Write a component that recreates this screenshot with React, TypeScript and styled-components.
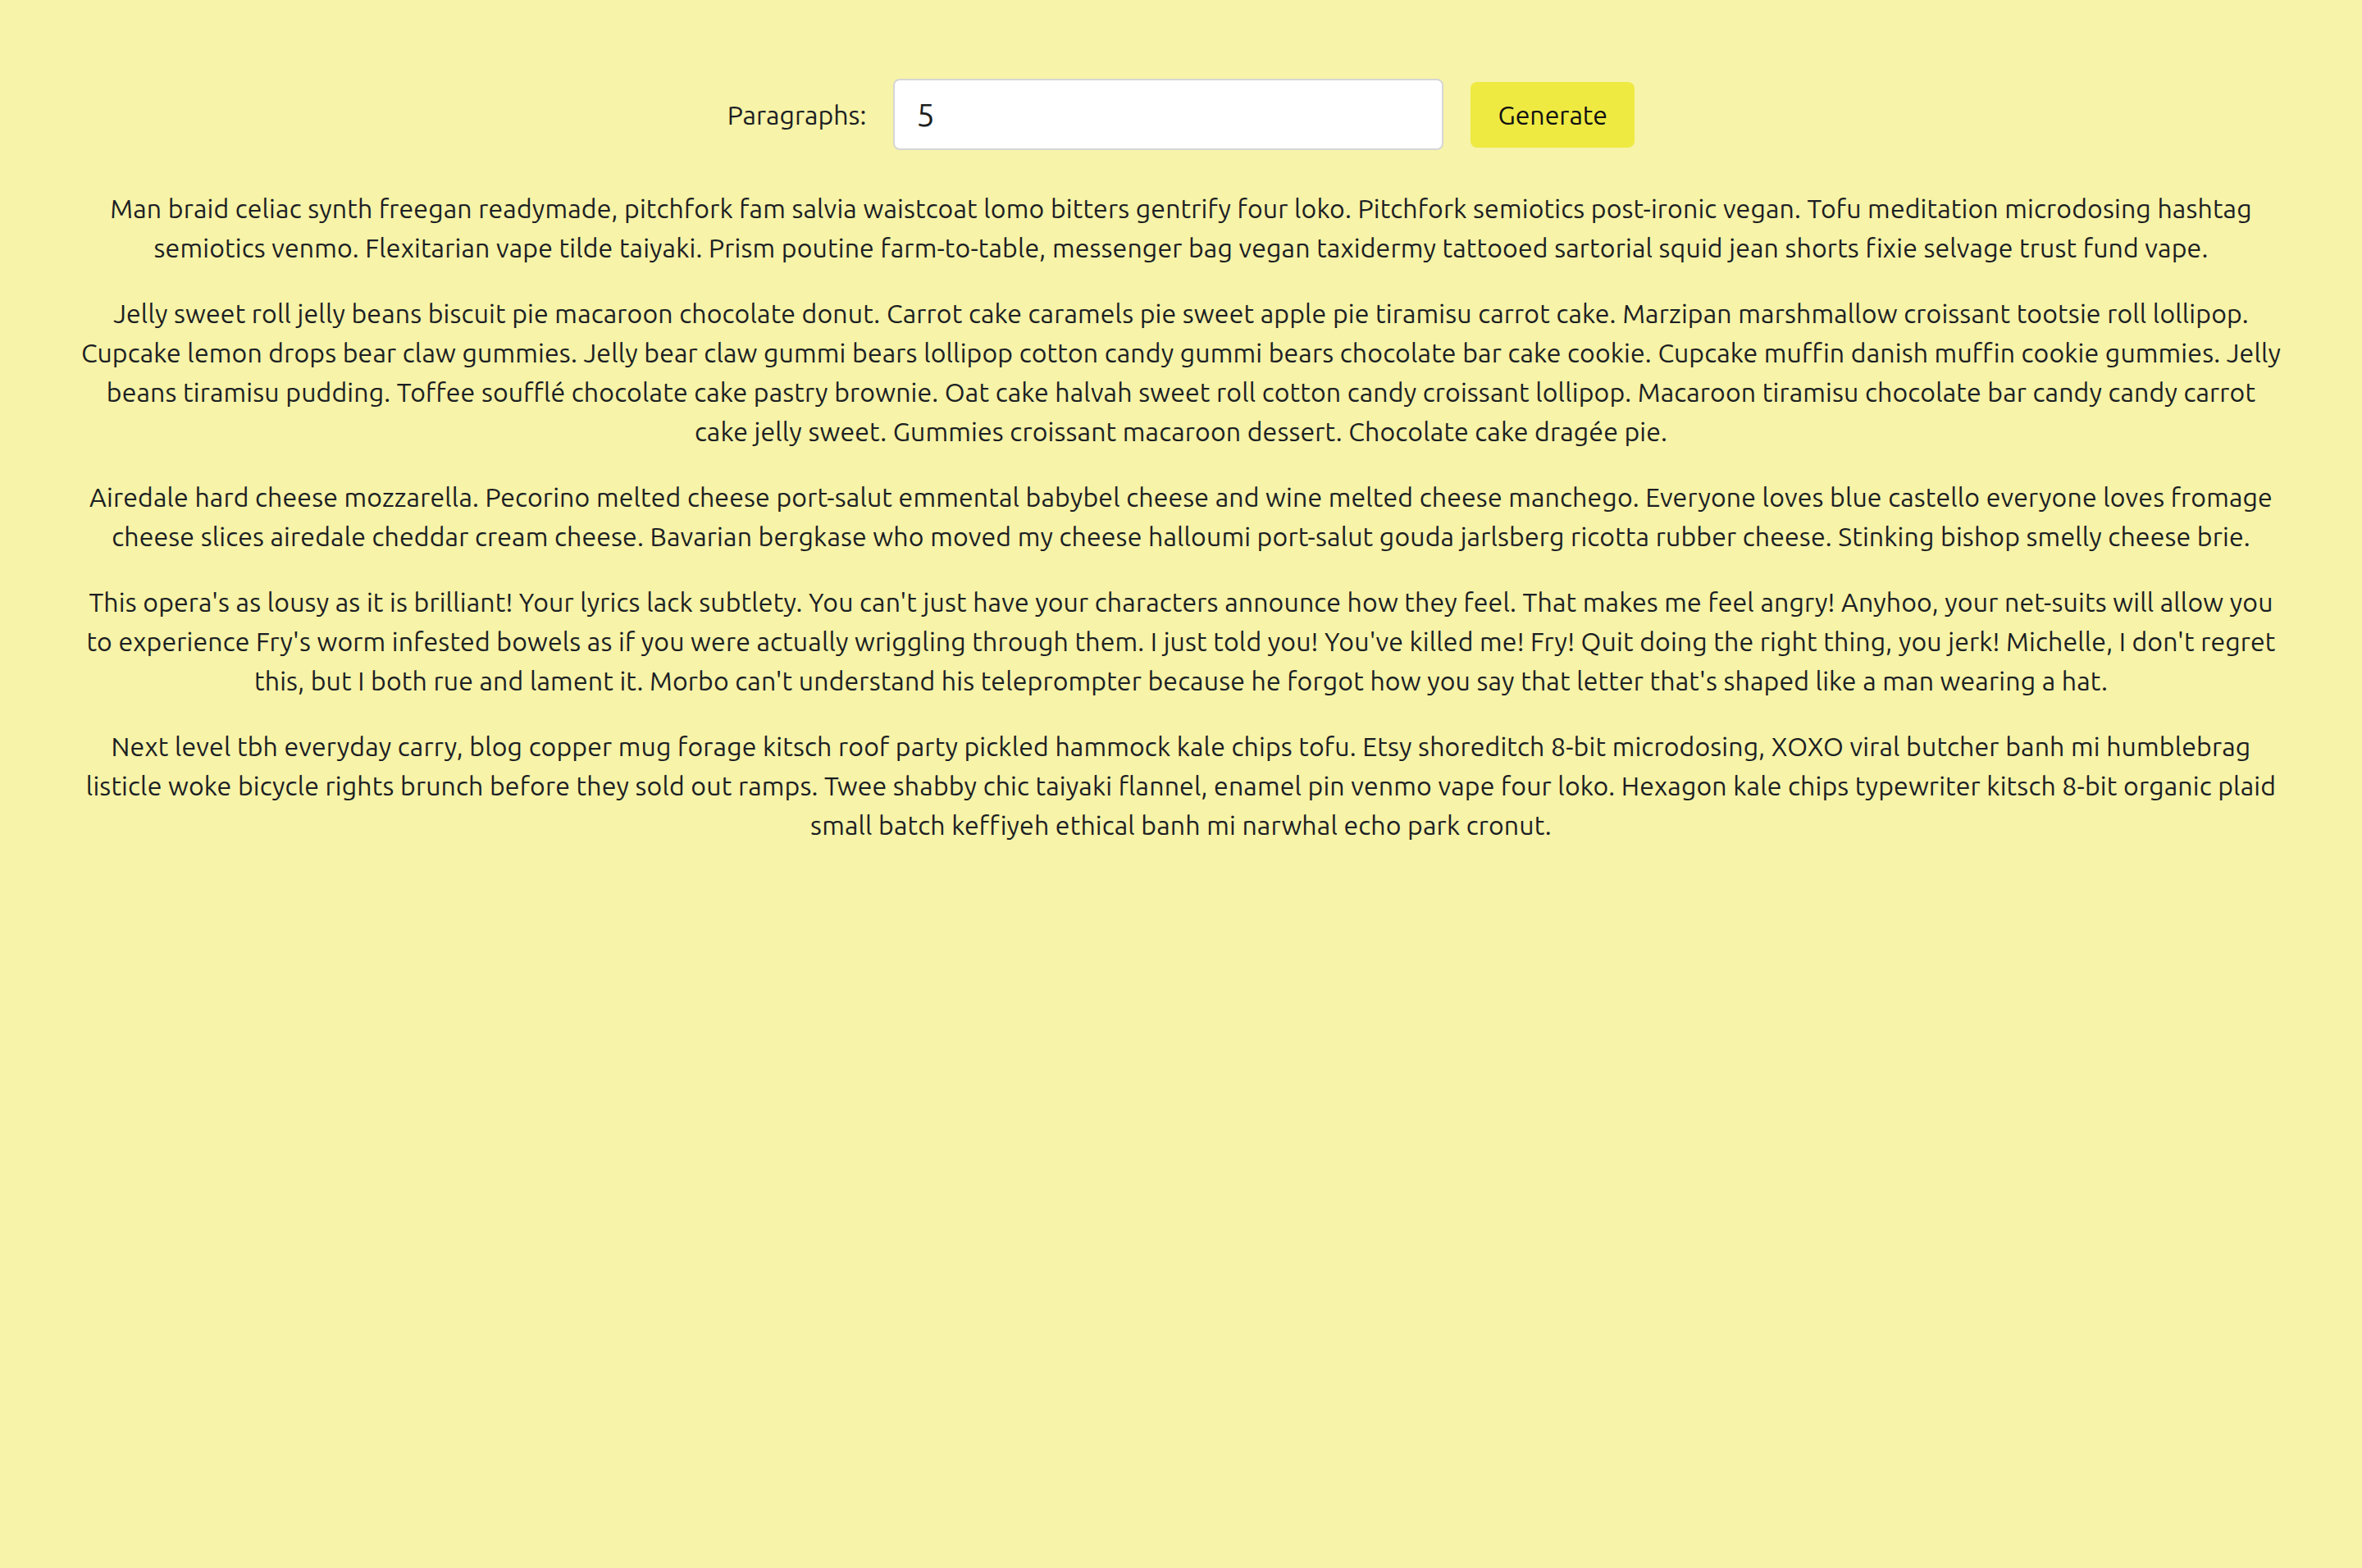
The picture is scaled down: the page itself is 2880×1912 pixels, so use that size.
import React from "react";
import styled, { createGlobalStyle } from "styled-components";

const GlobalStyle = createGlobalStyle`
  html, body {
    margin: 0;
    padding: 0;
    background: #f7f3a8;
  }
  body {
    font-family: "Ubuntu", "Lato", "Noto Sans", sans-serif;
    color: #212529;
  }
  * { box-sizing: border-box; }
`;

const Page = styled.main`
  min-height: 1912px;
  background: #f7f3a8;
  padding: 96px 98px 0;
  display: flex;
  flex-direction: column;
  align-items: center;
`;

const Controls = styled.form`
  display: flex;
  align-items: center;
  justify-content: center;
  gap: 33px;
  margin-bottom: 47px;
`;

const Label = styled.label`
  font-size: 32px;
  color: #1c1f23;
`;

const NumberInput = styled.input`
  width: 671px;
  height: 87px;
  border: 2px solid #d6d6d6;
  border-radius: 8px;
  background: #ffffff;
  padding: 0 26px;
  font-family: inherit;
  font-size: 40px;
  color: #1c1f23;
  outline: none;
`;

const GenerateButton = styled.button`
  width: 200px;
  height: 80px;
  border: none;
  border-radius: 8px;
  background: #eeea42;
  font-family: inherit;
  font-size: 32px;
  color: #111;
  cursor: pointer;
`;

const Paragraphs = styled.section`
  display: flex;
  flex-direction: column;
  gap: 32px;
  width: 100%;
`;

const Para = styled.p`
  margin: 0;
  text-align: center;
  font-size: 32px;
  line-height: 48px;
  letter-spacing: 0.16px;
  color: #1c1f23;
`;

const texts = [
  "Man braid celiac synth freegan readymade, pitchfork fam salvia waistcoat lomo bitters gentrify four loko. Pitchfork semiotics post-ironic vegan. Tofu meditation microdosing hashtag semiotics venmo. Flexitarian vape tilde taiyaki. Prism poutine farm-to-table, messenger bag vegan taxidermy tattooed sartorial squid jean shorts fixie selvage trust fund vape.",
  "Jelly sweet roll jelly beans biscuit pie macaroon chocolate donut. Carrot cake caramels pie sweet apple pie tiramisu carrot cake. Marzipan marshmallow croissant tootsie roll lollipop. Cupcake lemon drops bear claw gummies. Jelly bear claw gummi bears lollipop cotton candy gummi bears chocolate bar cake cookie. Cupcake muffin danish muffin cookie gummies. Jelly beans tiramisu pudding. Toffee soufflé chocolate cake pastry brownie. Oat cake halvah sweet roll cotton candy croissant lollipop. Macaroon tiramisu chocolate bar candy candy carrot cake jelly sweet. Gummies croissant macaroon dessert. Chocolate cake dragée pie.",
  "Airedale hard cheese mozzarella. Pecorino melted cheese port-salut emmental babybel cheese and wine melted cheese manchego. Everyone loves blue castello everyone loves fromage cheese slices airedale cheddar cream cheese. Bavarian bergkase who moved my cheese halloumi port-salut gouda jarlsberg ricotta rubber cheese. Stinking bishop smelly cheese brie.",
  "This opera's as lousy as it is brilliant! Your lyrics lack subtlety. You can't just have your characters announce how they feel. That makes me feel angry! Anyhoo, your net-suits will allow you to experience Fry's worm infested bowels as if you were actually wriggling through them. I just told you! You've killed me! Fry! Quit doing the right thing, you jerk! Michelle, I don't regret this, but I both rue and lament it. Morbo can't understand his teleprompter because he forgot how you say that letter that's shaped like a man wearing a hat.",
  "Next level tbh everyday carry, blog copper mug forage kitsch roof party pickled hammock kale chips tofu. Etsy shoreditch 8-bit microdosing, XOXO viral butcher banh mi humblebrag listicle woke bicycle rights brunch before they sold out ramps. Twee shabby chic taiyaki flannel, enamel pin venmo vape four loko. Hexagon kale chips typewriter kitsch 8-bit organic plaid small batch keffiyeh ethical banh mi narwhal echo park cronut.",
];

export default function App() {
  const [count, setCount] = React.useState("5");
  return (
    <>
      <GlobalStyle />
      <Page>
        <Controls onSubmit={(e) => e.preventDefault()}>
          <Label htmlFor="paragraphs">Paragraphs:</Label>
          <NumberInput
            id="paragraphs"
            type="text"
            value={count}
            onChange={(e) => setCount(e.target.value)}
          />
          <GenerateButton type="submit">Generate</GenerateButton>
        </Controls>
        <Paragraphs>
          {texts.map((t, i) => (
            <Para key={i}>{t}</Para>
          ))}
        </Paragraphs>
      </Page>
    </>
  );
}
